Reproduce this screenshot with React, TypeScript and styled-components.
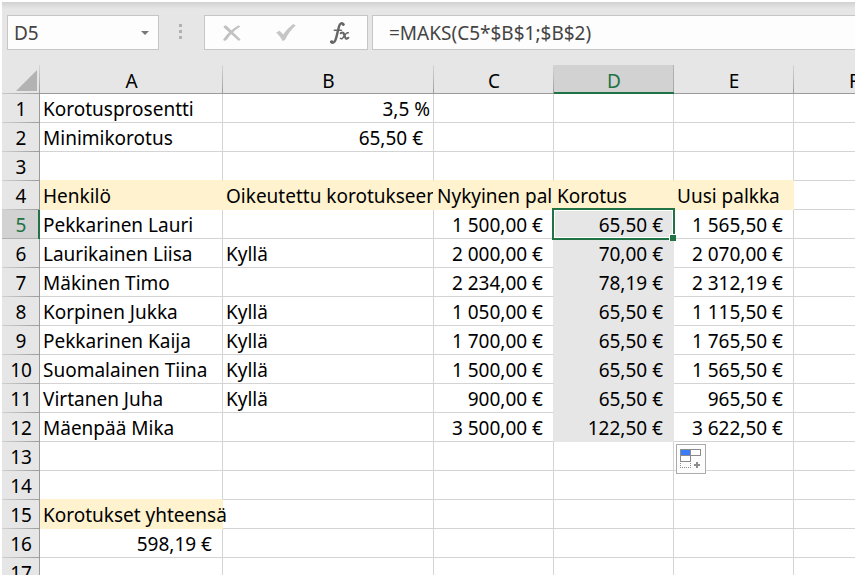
import React from 'react';
import styled, { createGlobalStyle, css } from 'styled-components';

const GRID = '#d4d4d4';
const YELLOW = '#fff2cf';
const SHADE = '#e6e6e6';
const GREEN = '#217346';
const HEAD_LINE = '#9b9b9b';

const GlobalStyle = createGlobalStyle`
  *, *::before, *::after { box-sizing: border-box; }
  body {
    margin: 0;
    background: #fff;
    color: #000;
    font-family: 'Noto Sans', 'Open Sans', sans-serif;
    font-size: 19px;
  }
`;

const Page = styled.div`
  height: 100vh;
  padding: 2px;
  overflow: hidden;
`;

const Workbook = styled.main`
  height: 100%;
  overflow: hidden;
  background: #e6e6e6;
`;

const FormulaBar = styled.div`
  display: flex;
  align-items: stretch;
  height: 63px;
  padding: 13px 0 15px 5px;
  background: linear-gradient(#d2d2d2, #e6e6e6 7px);
`;

const NameBox = styled.div`
  display: flex;
  flex: none;
  width: 152px;
  border: 1px solid #c6c6c6;
  background: #fdfdfd;
`;

const NameInput = styled.input`
  flex: 1;
  min-width: 0;
  padding: 0 0 0 6px;
  border: 0;
  outline: 0;
  background: transparent;
  color: #444;
  font: inherit;
`;

const PlainButton = styled.button`
  display: flex;
  align-items: center;
  justify-content: center;
  padding: 0;
  border: 0;
  background: transparent;
`;

const DropButton = styled(PlainButton)`
  width: 27px;
`;

const Grip = styled.div`
  display: flex;
  flex-direction: column;
  flex: none;
  align-items: center;
  justify-content: center;
  gap: 3px;
  width: 45px;
  padding: 0 2px 3px 0;
`;

const Dot = styled.span`
  width: 3px;
  height: 3px;
  background: #b1b1b1;
`;

const Actions = styled.div`
  display: flex;
  flex: none;
  width: 164px;
  margin-right: 4px;
  border: 1px solid #c6c6c6;
  background: #fdfdfd;

  ${PlainButton} { flex: 1; }
`;

const FormulaInput = styled.input`
  flex: 1;
  min-width: 0;
  padding: 0 0 0 16px;
  border: 1px solid #c6c6c6;
  border-right: 0;
  border-radius: 0;
  outline: 0;
  background: #fdfdfd;
  color: #444;
  font: inherit;
`;

const Sheet = styled.table`
  width: 100%;
  min-width: 912px;
  table-layout: fixed;
  border-collapse: separate;
  border-spacing: 0;
  background: #fff;
  line-height: 28px;
`;

const Col = styled.col<{ $w?: number }>`
  ${p => p.$w && css`width: ${p.$w}px;`}
`;

const Corner = styled.td`
  height: 29px;
  padding: 0 3px 3px 0;
  background:
    linear-gradient(#d6d6d6, ${HEAD_LINE}) right / 1px 100% no-repeat,
    linear-gradient(to right, #c8c8c8, ${HEAD_LINE}) bottom / 100% 1px no-repeat,
    #e6e6e6;
  line-height: 0;
  text-align: right;
  vertical-align: bottom;
`;

const ColumnHead = styled.th<{ $on: boolean }>`
  height: 29px;
  padding: 3px 0 0;
  overflow: hidden;
  font-weight: 400;
  line-height: 26px;
  color: ${p => (p.$on ? GREEN : '#000')};
  background: ${p =>
    p.$on
      ? `linear-gradient(${GREEN}, ${GREEN}) bottom / 100% 2px no-repeat,
         linear-gradient(#b5b5b5, #a5a5a5) right / 1px 100% no-repeat, #d2d2d2`
      : `linear-gradient(${HEAD_LINE}, ${HEAD_LINE}) bottom / 100% 1px no-repeat,
         linear-gradient(#d6d6d6, ${HEAD_LINE}) right / 1px 100% no-repeat, #e6e6e6`};
`;

const RowHead = styled.th<{ $on: boolean }>`
  height: 29px;
  padding: 1px 0 0;
  font-weight: 400;
  color: ${p => (p.$on ? GREEN : '#000')};
  background: ${p =>
    p.$on
      ? `linear-gradient(${GREEN}, ${GREEN}) right / 2px 100% no-repeat,
         linear-gradient(#b0b0b0, #b0b0b0) bottom / 100% 1px no-repeat, #d2d2d2`
      : `linear-gradient(${HEAD_LINE}, ${HEAD_LINE}) right / 1px 100% no-repeat,
         linear-gradient(to right, #d0d0d0, ${HEAD_LINE}) bottom / 100% 1px no-repeat, #e6e6e6`};
`;

type CellStyle = {
  $fill: string;
  $right: string;
  $bottom: string;
  $spill: boolean;
};

const Cell = styled.td<CellStyle>`
  position: relative;
  height: 29px;
  padding: 0;
  border-right: 1px solid ${p => p.$right};
  border-bottom: 1px solid ${p => p.$bottom};
  background: ${p => p.$fill};
  ${p => p.$spill && css`z-index: 1;`}
`;

const Value = styled.div<{ $kind: 'text' | 'percent' | 'currency'; $spill: boolean }>`
  height: 28px;
  padding-left: 3px;
  padding-right: ${p => ({ text: 0, percent: 3, currency: 10 })[p.$kind]}px;
  line-height: 30px;
  text-align: ${p => (p.$kind === 'text' ? 'left' : 'right')};
  white-space: nowrap;
  overflow: ${p => (p.$spill ? 'visible' : 'hidden')};
`;

const ActiveFrame = styled.div`
  position: absolute;
  z-index: 2;
  inset: -2px;
  border: 2px solid ${GREEN};
  box-shadow: inset 0 0 0 1px #fff;
  pointer-events: none;

  &::after {
    content: '';
    position: absolute;
    right: -3px;
    bottom: -3px;
    width: 7px;
    height: 7px;
    border: solid #fff;
    border-width: 1px 0 0 1px;
    background: ${GREEN};
  }
`;

const FillOptions = styled(PlainButton)`
  position: absolute;
  z-index: 3;
  top: 2px;
  left: 2px;
  width: 30px;
  height: 30px;
  border: 1px solid #ababab;
  background: #fdfdfd;
`;

const columns = ['A', 'B', 'C', 'D', 'E', 'F'];
const widths = [183, 211, 120, 120, 120];

const rows: string[][] = [
  ['Korotusprosentti', '3,5 %'],
  ['Minimikorotus', '65,50 €'],
  [],
  ['Henkilö', 'Oikeutettu korotukseen', 'Nykyinen palkka', 'Korotus', 'Uusi palkka'],
  ['Pekkarinen Lauri', '', '1 500,00 €', '65,50 €', '1 565,50 €'],
  ['Laurikainen Liisa', 'Kyllä', '2 000,00 €', '70,00 €', '2 070,00 €'],
  ['Mäkinen Timo', '', '2 234,00 €', '78,19 €', '2 312,19 €'],
  ['Korpinen Jukka', 'Kyllä', '1 050,00 €', '65,50 €', '1 115,50 €'],
  ['Pekkarinen Kaija', 'Kyllä', '1 700,00 €', '65,50 €', '1 765,50 €'],
  ['Suomalainen Tiina', 'Kyllä', '1 500,00 €', '65,50 €', '1 565,50 €'],
  ['Virtanen Juha', 'Kyllä', '900,00 €', '65,50 €', '965,50 €'],
  ['Mäenpää Mika', '', '3 500,00 €', '122,50 €', '3 622,50 €'],
  [],
  [],
  ['Korotukset yhteensä'],
  ['598,19 €'],
  [],
];

function fillOf(r: number, c: number): string | null {
  if (r === 4 && c < 5) return YELLOW;
  if (r === 15 && c === 0) return YELLOW;
  if (c === 3 && r >= 5 && r <= 12) return SHADE;
  return null;
}

function kindOf(text: string) {
  if (text.endsWith('€')) return 'currency';
  return text.endsWith('%') ? 'percent' : 'text';
}

function SheetCell({ r, c }: { r: number; c: number }) {
  const text = rows[r - 1][c] ?? '';
  const fill = fillOf(r, c);
  const spill = text !== '' && !rows[r - 1][c + 1];
  return (
    <Cell
      $fill={fill ?? '#fff'}
      $right={fill ?? fillOf(r, c + 1) ?? GRID}
      $bottom={fill ?? fillOf(r + 1, c) ?? GRID}
      $spill={spill}
    >
      <Value $kind={kindOf(text)} $spill={spill}>
        {text}
      </Value>
      {r === 5 && c === 3 && <ActiveFrame />}
      {r === 13 && c === 4 && (
        <FillOptions type="button" aria-label="Automaattisen täytön asetukset">
          <FillIcon />
        </FillOptions>
      )}
    </Cell>
  );
}

const FillIcon = () => (
  <svg width="22" height="20" viewBox="0 0 22 20" shapeRendering="crispEdges">
    <rect x="10.5" y="0.5" width="10" height="6" fill="#fff" stroke="#8c8c8c" />
    <rect x="0.5" y="6.5" width="10" height="6" fill="#fff" stroke="#8c8c8c" />
    <rect x="0.5" y="0.5" width="10" height="6" fill="#3b7cff" stroke="#8c8c8c" />
    <path d="M0.5 14V19M10.5 14V19M0 18.5H11" fill="none" stroke="#8c8c8c" strokeDasharray="1 1" />
    <path d="M14 15h2v-2h2v2h2v2h-2v2h-2v-2h-2z" fill="#8c8c8c" />
  </svg>
);

export default function App() {
  return (
    <Page>
      <GlobalStyle />
      <Workbook>
        <FormulaBar>
          <NameBox>
            <NameInput aria-label="Nimiruutu" defaultValue="D5" />
            <DropButton type="button" aria-label="Avaa nimiluettelo">
              <svg width="8" height="4" viewBox="0 0 8 4">
                <path d="M0 0H8L4 4Z" fill="#777" />
              </svg>
            </DropButton>
          </NameBox>
          <Grip>
            <Dot />
            <Dot />
            <Dot />
          </Grip>
          <Actions>
            <PlainButton type="button" aria-label="Peruuta">
              <svg width="18" height="16" viewBox="0 0 18 16">
                <path d="M.5 1.800C1.500 0 3.200.2 4.400 1.400L17.600 14.400 15.800 16 1 2.800Z" fill="#c2c2c2" />
                <path d="M15.500.2 17.300 1.400C11.300 5.400 6.900 9.800 3.600 15 2.400 16.200.4 15.800.2 14.400 3.900 8.600 9.300 3.800 15.500.2Z" fill="#c2c2c2" />
              </svg>
            </PlainButton>
            <PlainButton type="button" aria-label="Hyväksy">
              <svg width="20" height="17" viewBox="0 0 20 17">
                <path d="M.2 8.400 3.600 6.800 7.200 10.400C10 6.400 13.500 2.800 17.400.1L19.700 1.500C15 5.800 11.700 10.700 9 16L6.600 16.900C5 13.800 2.800 11 .2 8.400Z" fill="#c6c6c6" />
              </svg>
            </PlainButton>
            <PlainButton type="button" aria-label="Lisää funktio">
              <svg width="20" height="22" viewBox="0 0 20 22" fill="none" stroke="#666" strokeLinecap="round">
                <path d="M13.400 2.300C12.300.6 10.200 1.200 9.300 3.600 8 7.400 7.200 13 5.600 17.600 4.700 20.400 2.500 21.600 1.200 20" strokeWidth="2.400" />
                <path d="M4.300 8.200H11.300" strokeWidth="1.600" />
                <circle cx="13.200" cy="2.600" r="1.400" fill="#666" stroke="none" />
                <circle cx="1.700" cy="19.600" r="1.400" fill="#666" stroke="none" />
                <path d="M10.800 11.200C13.200 9.400 13.800 11.500 14.500 13.500S16 18.200 18.300 15.800" strokeWidth="2.200" />
                <path d="M18.300 10.700C16.200 10.400 15 12.500 14 14.200S11.800 17.300 10.400 16.400" strokeWidth="1.500" />
              </svg>
            </PlainButton>
          </Actions>
          <FormulaInput aria-label="Kaava" defaultValue="=MAKS(C5*$B$1;$B$2)" />
        </FormulaBar>
        <Sheet>
          <colgroup>
            <Col $w={38} />
            {widths.map((w, i) => (
              <Col key={i} $w={w} />
            ))}
            <Col />
          </colgroup>
          <thead>
            <tr>
              <Corner>
                <svg width="21" height="21" viewBox="0 0 21 21">
                  <path d="M21 0V21H0Z" fill="#b3b3b3" />
                </svg>
              </Corner>
              {columns.map(name => (
                <ColumnHead key={name} scope="col" $on={name === 'D'}>
                  {name}
                </ColumnHead>
              ))}
            </tr>
          </thead>
          <tbody>
            {rows.map((_, i) => (
              <tr key={i}>
                <RowHead scope="row" $on={i === 4}>
                  {i + 1}
                </RowHead>
                {columns.map((name, c) => (
                  <SheetCell key={name} r={i + 1} c={c} />
                ))}
              </tr>
            ))}
          </tbody>
        </Sheet>
      </Workbook>
    </Page>
  );
}
